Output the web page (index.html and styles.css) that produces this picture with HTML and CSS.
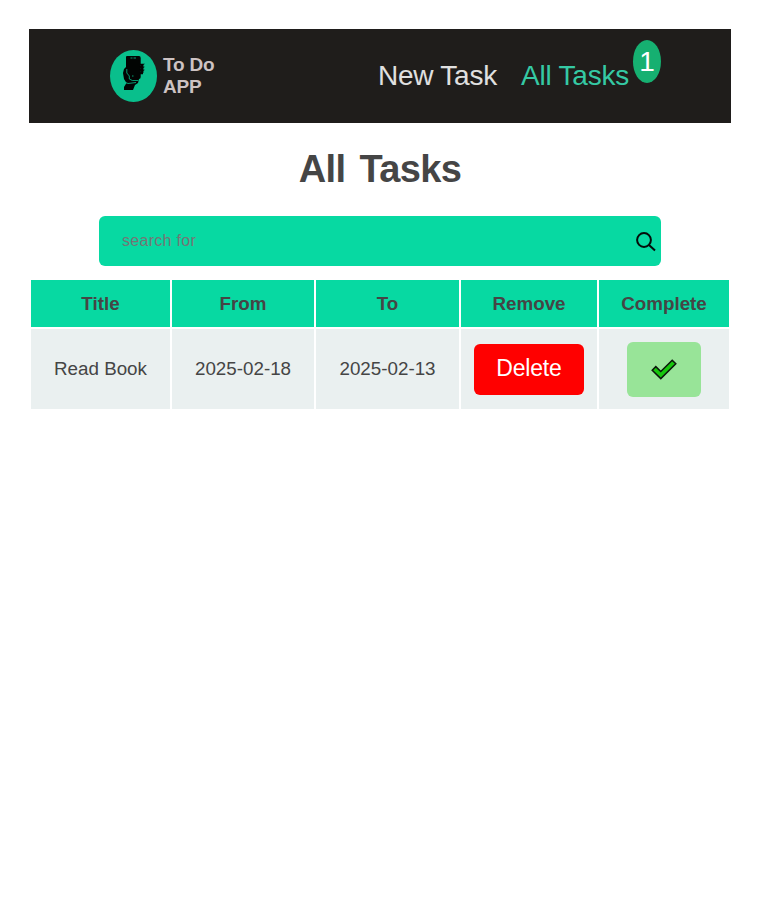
FILE: index.html
```html
<!DOCTYPE html>
<html lang="en">
<head>
<meta charset="utf-8">
<title>To Do App</title>
<link rel="stylesheet" href="styles.css">
</head>
<body>
<header class="navbar">
  <div class="brand">
    <svg class="logo" viewBox="0 0 47 52">
      <ellipse cx="23.5" cy="26" rx="23.5" ry="26" fill="#09bf8c"/>
      <path fill="#020403" d="M17 6H29Q30.7 6 30.7 8V27Q30.7 29 29 29L28 33L25 35L23 40H14V37L16.5 33L14 29L13 23L14 19L16 17V7Q16 6 17 6Z"/>
      <path stroke="#020403" stroke-width="1.3" fill="none" d="M30 14.5h3l-2 1.5h2.5M30 17.5h3l-2 1.5h2.5M30 20.5h3l-2 1.5h2.5M30 23.5h3"/>
      <path stroke="#09bf8c" stroke-width=".8" fill="none" d="M16.8 19v4l2.5 3v3l3 1.500h6M15.500 32.500l2.500 1l8-1M20.500 8h2m1 0h2.500M22 26h1.500"/>
    </svg>
    <span class="brand-name">To Do<br>APP</span>
  </div>
  <nav class="links">
    <a class="link">New Task</a>
    <a class="link active">All Tasks<span class="count">1</span></a>
  </nav>
</header>
<main>
  <h1>All Tasks</h1>
  <div class="search">
    <input type="text" placeholder="search for">
    <svg class="search-icon" viewBox="0 0 20 20"><circle cx="8" cy="8" r="6.9"/><path d="M13 13l6 5.5"/></svg>
  </div>
  <table>
    <colgroup><col class="c-title"><col class="c-from"><col class="c-to"><col class="c-remove"><col class="c-complete"></colgroup>
    <thead><tr><th>Title</th><th>From</th><th>To</th><th>Remove</th><th>Complete</th></tr></thead>
    <tbody><tr>
      <td>Read Book</td><td>2025-02-18</td><td>2025-02-13</td>
      <td><button class="delete">Delete</button></td>
      <td><button class="complete"><svg viewBox="0 0 26 21"><path d="M1.2 11.2L4.8 7.6L9.8 12.5L21.2 1.2L24.8 4.8L9.8 19.6Z"/></svg></button></td>
    </tr></tbody>
  </table>
</main>
</body>
</html>
```
FILE: styles.css
```css
* { box-sizing: border-box; }
body {
  margin: 0;
  padding: 29px;
  background: #fff;
  color: #454545;
  font-family: "Liberation Sans", Arial, sans-serif;
}
.navbar {
  display: flex;
  justify-content: space-between;
  align-items: center;
  height: 94px;
  padding: 0 70px 0 81px;
  background: #1f1d1b;
}
.brand { display: flex; align-items: center; gap: 6px; }
.logo { width: 47px; height: 52px; }
.brand-name {
  color: #cdc3c3;
  font-size: 19px;
  font-weight: bold;
  letter-spacing: -0.2px;
  line-height: 22px;
}
.links { display: flex; gap: 24px; }
.link {
  position: relative;
  color: #e0e0e0;
  font-size: 28px;
  letter-spacing: -0.22px;
  line-height: 32px;
}
.active { color: #35c9a4; padding-right: 32px; }
.count {
  position: absolute;
  top: -20px;
  right: 0;
  width: 28px;
  height: 43px;
  border-radius: 50%;
  background: #16b071;
  color: #fff;
  line-height: 43px;
  text-align: center;
}
h1 {
  margin: 24px 0 25px;
  font-size: 38px;
  letter-spacing: -0.6px;
  word-spacing: 4px;
  line-height: 44px;
  text-align: center;
}
.search {
  display: flex;
  align-items: center;
  width: 562px;
  height: 50px;
  margin: 0 auto 12px;
  padding: 0 5px 0 23px;
  border-radius: 6px;
  background: #07d9a2;
}
.search input {
  flex: 1;
  padding: 0;
  border: 0;
  outline: 0;
  background: transparent;
  font: 16px "Liberation Sans", Arial, sans-serif;
  letter-spacing: 0.3px;
}
.search input::placeholder { color: #757575; }
.search-icon {
  width: 20px;
  height: 20px;
  margin-top: 1px;
  fill: none;
  stroke: #050b09;
  stroke-width: 2;
}
table {
  width: 702px;
  table-layout: fixed;
  border-spacing: 2px;
  font-size: 18.8px;
  text-align: center;
}
.c-title { width: 139px; }
.c-from { width: 142px; }
.c-to { width: 143px; }
.c-remove { width: 136px; }
.c-complete { width: 130px; }
th, td { padding: 0; }
th { height: 47px; background: #07d9a2; }
td { height: 80px; background: #eaf0f0; }
button {
  display: block;
  margin: 0 auto;
  padding: 0;
  border: 0;
  border-radius: 6px;
}
.delete {
  width: 110px;
  height: 51px;
  padding-bottom: 2px;
  background: #f00;
  color: #fff;
  font: 23px "Liberation Sans", Arial, sans-serif;
  letter-spacing: -0.2px;
}
.complete { width: 74px; height: 55px; background: #98e498; }
.complete svg {
  display: block;
  width: 26px;
  height: 21px;
  margin: 0 auto;
  fill: #16c60c;
  stroke: #0b160b;
  stroke-width: 1.5;
}
```
